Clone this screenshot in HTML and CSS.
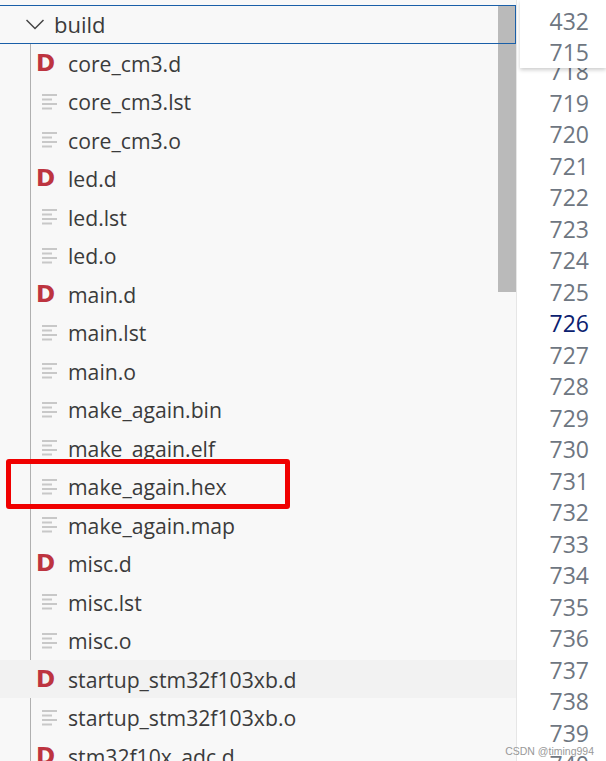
FILE: index.html
```html
<!DOCTYPE html>
<html lang="en">
<head>
    <meta charset="UTF-8">
    <title>build</title>
    <link rel="stylesheet" href="styles.css">
</head>
<body>

    <div class="page">
        <!-- Explorer -->
        <div class="explorer">
            <div class="folder">
                <svg class="chevron" width="18" height="11" viewBox="0 0 18 11"><path d="M0.500 1 L9 9.500 L17.500 1" fill="none" stroke="#444" stroke-width="1.500"/></svg>
                <span>build</span>
            </div>
            <div class="tree">
                <div class="row"><span class="dep">D</span><span class="name">core_cm3.d</span></div>
                <div class="row"><svg class="lines"><use href="#lines"/></svg><span class="name">core_cm3.lst</span></div>
                <div class="row"><svg class="lines"><use href="#lines"/></svg><span class="name">core_cm3.o</span></div>
                <div class="row"><span class="dep">D</span><span class="name">led.d</span></div>
                <div class="row"><svg class="lines"><use href="#lines"/></svg><span class="name">led.lst</span></div>
                <div class="row"><svg class="lines"><use href="#lines"/></svg><span class="name">led.o</span></div>
                <div class="row"><span class="dep">D</span><span class="name">main.d</span></div>
                <div class="row"><svg class="lines"><use href="#lines"/></svg><span class="name">main.lst</span></div>
                <div class="row"><svg class="lines"><use href="#lines"/></svg><span class="name">main.o</span></div>
                <div class="row"><svg class="lines"><use href="#lines"/></svg><span class="name">make_again.bin</span></div>
                <div class="row"><svg class="lines"><use href="#lines"/></svg><span class="name">make_again.elf</span></div>
                <div class="row"><svg class="lines"><use href="#lines"/></svg><span class="name">make_again.hex</span></div>
                <div class="row"><svg class="lines"><use href="#lines"/></svg><span class="name">make_again.map</span></div>
                <div class="row"><span class="dep">D</span><span class="name">misc.d</span></div>
                <div class="row"><svg class="lines"><use href="#lines"/></svg><span class="name">misc.lst</span></div>
                <div class="row"><svg class="lines"><use href="#lines"/></svg><span class="name">misc.o</span></div>
                <div class="row hover"><span class="dep">D</span><span class="name">startup_stm32f103xb.d</span></div>
                <div class="row"><svg class="lines"><use href="#lines"/></svg><span class="name">startup_stm32f103xb.o</span></div>
                <div class="row"><span class="dep">D</span><span class="name">stm32f10x_adc.d</span></div>
            </div>
            <div class="thumb"></div>
            <div class="highlight"></div>
        </div>

        <!-- Line numbers -->
        <div class="gutter">
            <div class="sticky">
                <div>432</div>
                <div>715</div>
            </div>
            <div class="num">718</div>
            <div class="num">719</div>
            <div class="num">720</div>
            <div class="num">721</div>
            <div class="num">722</div>
            <div class="num">723</div>
            <div class="num">724</div>
            <div class="num">725</div>
            <div class="num current">726</div>
            <div class="num">727</div>
            <div class="num">728</div>
            <div class="num">729</div>
            <div class="num">730</div>
            <div class="num">731</div>
            <div class="num">732</div>
            <div class="num">733</div>
            <div class="num">734</div>
            <div class="num">735</div>
            <div class="num">736</div>
            <div class="num">737</div>
            <div class="num">738</div>
            <div class="num">739</div>
            <div class="num">740</div>
        </div>
    </div>

    <div class="watermark">CSDN @timing994</div>

    <svg class="defs" width="0" height="0">
        <symbol id="lines" viewBox="0 0 16 16">
            <path d="M0 1 H15 M0 5.500 H10 M0 10 H15 M0 14.500 H10" fill="none" stroke="#c8c8c8" stroke-width="2"/>
        </symbol>
    </svg>

</body>
</html>
```

FILE: styles.css
```css
* {
    margin: 0;
    padding: 0;
    box-sizing: border-box;
}

body {
    width: 606px;
    height: 761px;
    overflow: hidden;
    background-color: #fff;
    font-family: 'Open Sans', sans-serif;
    position: relative;
}

.page {
    display: flex;
    height: 761px;
}

/* Explorer */
.explorer {
    width: 517px;
    height: 761px;
    background-color: #f8f8f8;
    border-right: 1px solid #e6e6e6;
    padding-top: 5px;
    position: relative;
    overflow: hidden;
    flex-shrink: 0;
}

.folder {
    height: 38.75px;
    margin-bottom: 0;
    display: flex;
    align-items: center;
    padding-left: 26px;
    gap: 10px;
    font-size: 22px;
    color: #3b3b3b;
    border-top: 1px solid #1a5fa8;
    border-bottom: 1px solid #1a5fa8;
    border-right: 1px solid #1a5fa8;
    position: relative;
    z-index: 1;
}

.tree {
    margin-left: 30px;
    border-left: 1px solid #b0b0b0;
}

.row {
    height: 38.5px;
    display: flex;
    align-items: center;
    padding-left: 6px;
    font-size: 21.2px;
    color: #3b3b3b;
    white-space: nowrap;
    position: relative;
}

.row.hover {
    background-color: #f2f2f2;
}

.row.hover::before {
    content: "";
    position: absolute;
    left: -31px;
    top: 0;
    width: 31px;
    height: 100%;
    background-color: #f2f2f2;
}

.name {
    margin-left: 7px;
}

.dep {
    width: 25px;
    margin-left: -1px;
    font-family: 'DejaVu Sans', sans-serif;
    font-size: 23px;
    font-weight: 700;
    color: #bd3440;
    line-height: 1;
}

.lines {
    width: 16px;
    height: 16px;
    margin-left: 5px;
    margin-right: 3px;
}

.thumb {
    position: absolute;
    top: 5px;
    right: 0;
    width: 18px;
    height: 287px;
    background-color: #bababa;
}

.highlight {
    position: absolute;
    left: 6px;
    top: 459px;
    width: 284px;
    height: 50px;
    border: 5px solid #f00000;
    border-radius: 3px;
    z-index: 2;
}

/* Line numbers */
.gutter {
    flex: 1;
    padding-top: 56px;
    padding-right: 17px;
    position: relative;
    overflow: hidden;
    font-size: 23px;
    color: #6e7681;
    text-align: right;
}

.num {
    height: 31.5px;
    line-height: 31.5px;
}

.num.current {
    color: #0b216f;
}

.sticky {
    position: absolute;
    left: 3px;
    top: 0;
    right: 0;
    height: 68px;
    padding-top: 6px;
    padding-right: 17px;
    background-color: #fff;
    box-shadow: 0 2px 4px rgba(0, 0, 0, 0.2);
}

.sticky div {
    height: 31px;
    line-height: 31px;
}

.watermark {
    position: absolute;
    right: 12px;
    bottom: 4px;
    font-size: 10.5px;
    color: #999;
    font-family: 'Liberation Sans', sans-serif;
}

.defs {
    position: absolute;
}
```
